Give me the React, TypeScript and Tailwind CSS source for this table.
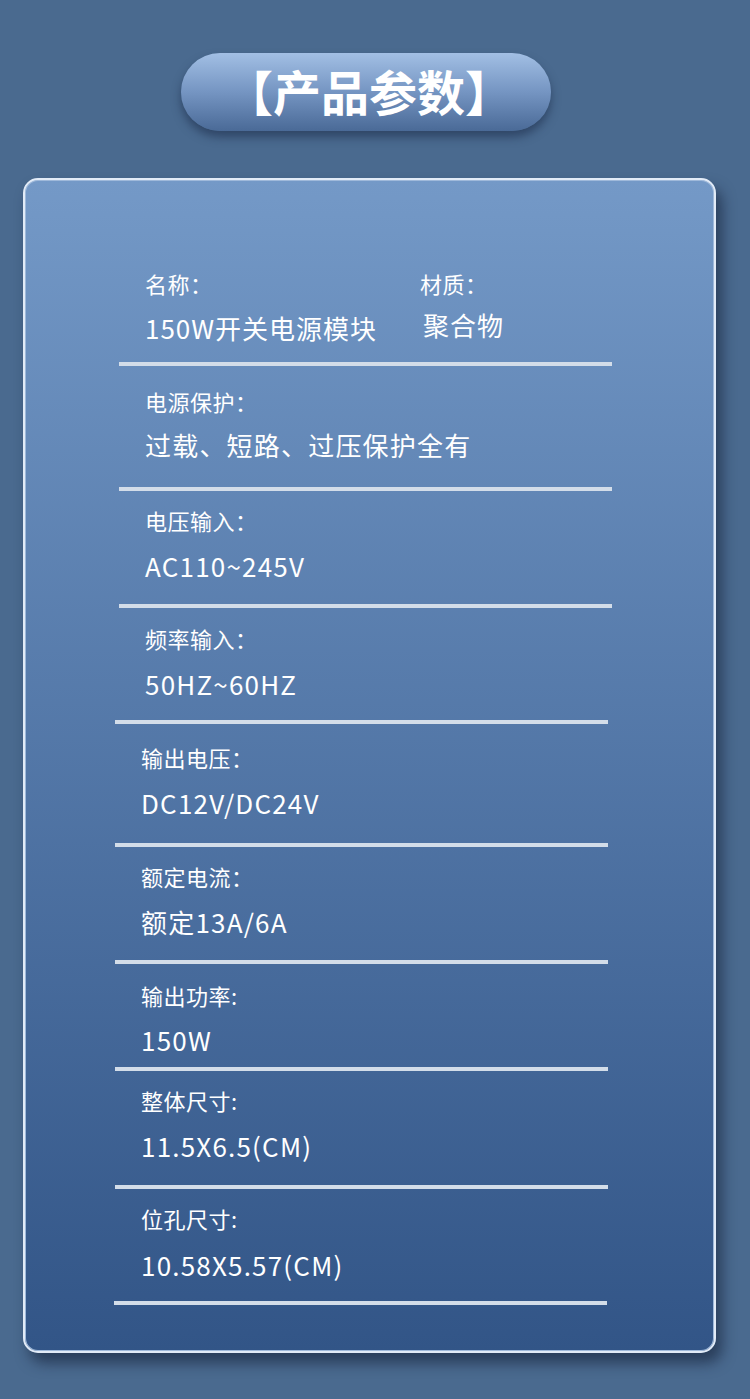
import React from "react";

type Row = {
  label: string;
  value: string;
  pt: string;
  gap: string;
  pb: string;
  textMl: string;
  lineMl: string;
};

const rows: Row[] = [
  { label: "电源保护：", value: "过载、短路、过压保护全有", pt: "pt-[24px]", gap: "mt-[20px]", pb: "pb-[29px]", textMl: "ml-[120px]", lineMl: "ml-[94px]" },
  { label: "电压输入：", value: "AC110~245V", pt: "pt-[18px]", gap: "mt-[22px]", pb: "pb-[25px]", textMl: "ml-[120px]", lineMl: "ml-[94px]" },
  { label: "频率输入：", value: "50HZ~60HZ", pt: "pt-[19px]", gap: "mt-[22px]", pb: "pb-[23px]", textMl: "ml-[120px]", lineMl: "ml-[90px]" },
  { label: "输出电压：", value: "DC12V/DC24V", pt: "pt-[22px]", gap: "mt-[22px]", pb: "pb-[27px]", textMl: "ml-[116px]", lineMl: "ml-[90px]" },
  { label: "额定电流：", value: "额定13A/6A", pt: "pt-[18px]", gap: "mt-[22px]", pb: "pb-[25px]", textMl: "ml-[116px]", lineMl: "ml-[90px]" },
  { label: "输出功率:", value: "150W", pt: "pt-[20px]", gap: "mt-[21px]", pb: "pb-[14px]", textMl: "ml-[116px]", lineMl: "ml-[90px]" },
  { label: "整体尺寸:", value: "11.5X6.5(CM)", pt: "pt-[18px]", gap: "mt-[22px]", pb: "pb-[26px]", textMl: "ml-[116px]", lineMl: "ml-[90px]" },
  { label: "位孔尺寸:", value: "10.58X5.57(CM)", pt: "pt-[18px]", gap: "mt-[23px]", pb: "pb-[23px]", textMl: "ml-[116px]", lineMl: "ml-[89px]" },
];

const font = { fontFamily: '"Noto Sans CJK SC", "Noto Sans", sans-serif' };

export default function App() {
  return (
    <div
      className="w-[750px] h-[1399px] bg-[#4a6a8f] overflow-hidden text-white"
      style={font}
    >
      {/* Title pill */}
      <div className="pt-[53px] pl-[181px]">
        <div className="w-[370px] h-[78px] rounded-full bg-gradient-to-b from-[#a2bfe4] via-[#7595c2] to-[#4a6a97] shadow-[0_6px_10px_rgba(25,40,70,0.55)] flex items-center justify-center">
          <span className="text-[48px] leading-[48px] font-bold -mt-[4px] ml-[6px]">
            【产品参数】
          </span>
        </div>
      </div>

      {/* Card */}
      <div className="mt-[47px] ml-[23px] w-[693px] h-[1175px] rounded-[15px] border-2 border-[#e2ebf7] bg-gradient-to-b from-[#7499c7] to-[#325587] shadow-[6px_10px_14px_rgba(20,32,55,0.6),inset_0_0_0_1px_#9fb9da]">
        <div className="pt-[92px]">
          {/* Row 1: two columns */}
          <div className="flex ml-[120px]">
            <div className="w-[275px]">
              <div className="text-[22px] leading-[22px] tracking-[0.5px]">名称：</div>
              <div className="mt-[21px] text-[26px] leading-[26px] tracking-[1px]">150W开关电源模块</div>
            </div>
            <div>
              <div className="text-[22px] leading-[22px] tracking-[0.5px]">材质：</div>
              <div className="mt-[18px] ml-[3px] text-[26px] leading-[26px] tracking-[1px]">聚合物</div>
            </div>
          </div>
          <div className="pb-[21px]" />
          <div className="ml-[94px] w-[493px] h-[4px] bg-[#d3dde9]" />

          {rows.map((r) => (
            <div key={r.label}>
              <div className={`${r.pt} ${r.pb} ${r.textMl}`}>
                <div className="text-[22px] leading-[22px] tracking-[0.5px]">{r.label}</div>
                <div className={`${r.gap} text-[26px] leading-[26px] tracking-[1.2px]`}>{r.value}</div>
              </div>
              <div className={`${r.lineMl} w-[493px] h-[4px] bg-[#d3dde9]`} />
            </div>
          ))}
        </div>
      </div>
    </div>
  );
}
